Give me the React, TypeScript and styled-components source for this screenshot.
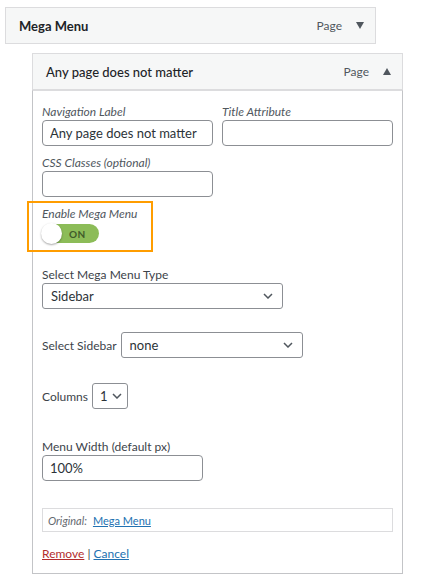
import React from "react";
import styled, { createGlobalStyle } from "styled-components";

const GlobalStyle = createGlobalStyle`
  body {
    margin: 0;
    background: #ffffff;
    font-family: "Lato", "Open Sans", sans-serif;
    color: #3c434a;
  }
`;

const Page = styled.div`
  padding-top: 7px;
  width: 443px;
  height: 580px;
  box-sizing: border-box;
`;

const ItemHeader = styled.div<{ $indent: number }>`
  position: relative;
  margin-left: ${(p) => p.$indent}px;
  width: 371px;
  height: 37px;
  box-sizing: border-box;
  border: 1px solid #dcdcde;
  background: #f6f7f7;
  display: flex;
  align-items: center;
  padding: 0 11px 0 13px;
  overflow: hidden;
`;

const ItemTitle = styled.span<{ $weight?: number }>`
  flex: 1;
  font-size: 13px;
  font-weight: ${(p) => p.$weight ?? 700};
  color: #1d2327;
`;

const ItemType = styled.span`
  font-size: 12px;
  color: #50575e;
  margin-right: 14px;
`;

const Arrow = styled.span<{ $up?: boolean }>`
  width: 0;
  height: 0;
  border-left: 4px solid transparent;
  border-right: 4px solid transparent;
  ${(p) =>
    p.$up
      ? "border-bottom: 7px solid #50575e;"
      : "border-top: 7px solid #50575e;"}
`;

const PeekText = styled.span`
  position: absolute;
  right: 11px;
  bottom: -9px;
  font-size: 10px;
  color: #a7aaad;
`;

const Item = styled.div`
  margin-top: 9px;
  margin-left: 32px;
  width: 371px;
`;

const Body = styled.div`
  border: 1px solid #c3c4c7;
  border-top-color: #dcdcde;
  padding: 12px 9px 12px 9px;
  height: 484px;
  box-sizing: border-box;
`;

const Row = styled.div`
  display: flex;
  gap: 9px;
`;

const Field = styled.div`
  display: flex;
  flex-direction: column;
`;

const ItalicLabel = styled.label`
  font-size: 12px;
  font-style: italic;
  color: #50575e;
  line-height: 17px;
`;

const Label = styled.label`
  font-size: 12px;
  color: #3c434a;
  line-height: 17px;
`;

const TextInput = styled.input<{ $w: number }>`
  width: ${(p) => p.$w}px;
  height: 26px;
  box-sizing: border-box;
  border: 1px solid #8c8f94;
  border-radius: 4px;
  padding: 0 7px;
  font-family: inherit;
  font-size: 13px;
  color: #2c3338;
  background: #fff;
  outline: none;
`;

const Highlight = styled.div`
  margin: 4px 0 0 -15px;
  width: 126px;
  height: 51px;
  box-sizing: border-box;
  border: 2px solid #ff9d00;
  padding: 2px 0 0 13px;
  display: flex;
  flex-direction: column;
`;

const Toggle = styled.div`
  position: relative;
  margin-top: 2px;
  width: 57px;
  height: 19px;
  border-radius: 10px;
  background: #8cbc58;
  display: flex;
  align-items: center;
  padding-left: 27px;
  box-sizing: border-box;
  font-size: 10px;
  font-weight: 700;
  color: #3f5a2a;
  letter-spacing: 0.3px;
`;

const Knob = styled.span`
  position: absolute;
  left: -1px;
  top: -1px;
  width: 21px;
  height: 21px;
  border-radius: 50%;
  background: #fff;
  box-shadow: 0 1px 2px rgba(0, 0, 0, 0.35);
`;

const SelectBox = styled.div<{ $w: number; $pad?: string }>`
  width: ${(p) => p.$w}px;
  height: 26px;
  box-sizing: border-box;
  border: 1px solid #8c8f94;
  border-radius: 3px;
  display: flex;
  align-items: center;
  justify-content: space-between;
  padding: ${(p) => p.$pad ?? "0 9px 0 8px"};
  font-size: 13px;
  color: #2c3338;
  background: #fff;
`;

const Chevron = () => (
  <svg width="10" height="6" viewBox="0 0 10 6">
    <path d="M1 1l4 4 4-4" fill="none" stroke="#50575e" strokeWidth="1.5" />
  </svg>
);

const Section = styled.div<{ $top: number }>`
  margin-top: ${(p) => p.$top}px;
`;

const InlineRow = styled.div<{ $top: number }>`
  margin-top: ${(p) => p.$top}px;
  display: flex;
  align-items: center;
  gap: 4px;
`;

const Original = styled.div`
  margin-top: 27px;
  width: 351px;
  height: 24px;
  box-sizing: border-box;
  border: 1px solid #dcdcde;
  display: flex;
  align-items: center;
  padding-left: 5px;
  gap: 6px;
  font-size: 11px;
`;

const OrigLabel = styled.span`
  font-style: italic;
  color: #646970;
`;

const Link = styled.a<{ $danger?: boolean }>`
  color: ${(p) => (p.$danger ? "#b32d2e" : "#2271b1")};
  text-decoration: underline;
  cursor: pointer;
`;

const Actions = styled.div`
  margin-top: 14px;
  font-size: 12px;
  color: #3c434a;
`;

export default function App() {
  return (
    <>
      <GlobalStyle />
      <Page>
        <ItemHeader $indent={5}>
          <ItemTitle>Mega Menu</ItemTitle>
          <ItemType>Page</ItemType>
          <Arrow />
          <PeekText>Edit</PeekText>
        </ItemHeader>
        <Item>
          <ItemHeader $indent={0}>
            <ItemTitle $weight={500}>Any page does not matter</ItemTitle>
            <ItemType>Page</ItemType>
            <Arrow $up />
            <PeekText>Edit</PeekText>
          </ItemHeader>
          <Body>
            <Row>
              <Field>
                <ItalicLabel>Navigation Label</ItalicLabel>
                <TextInput $w={171} defaultValue="Any page does not matter" />
              </Field>
              <Field>
                <ItalicLabel>Title Attribute</ItalicLabel>
                <TextInput $w={171} />
              </Field>
            </Row>
            <Section $top={8}>
              <Field>
                <ItalicLabel>CSS Classes (optional)</ItalicLabel>
                <TextInput $w={171} />
              </Field>
            </Section>
            <Highlight>
              <ItalicLabel>Enable Mega Menu</ItalicLabel>
              <Toggle>
                <Knob />
                ON
              </Toggle>
            </Highlight>
            <Section $top={14}>
              <Field>
                <Label>Select Mega Menu Type</Label>
                <SelectBox $w={241}>
                  Sidebar
                  <Chevron />
                </SelectBox>
              </Field>
            </Section>
            <InlineRow $top={23}>
              <Label>Select Sidebar</Label>
              <SelectBox $w={182}>
                none
                <Chevron />
              </SelectBox>
            </InlineRow>
            <InlineRow $top={25}>
              <Label>Columns</Label>
              <SelectBox $w={36} $pad="0 5px 0 7px">
                1
                <Chevron />
              </SelectBox>
            </InlineRow>
            <Section $top={29}>
              <Field>
                <Label>Menu Width (default px)</Label>
                <TextInput $w={161} defaultValue="100%" />
              </Field>
            </Section>
            <Original>
              <OrigLabel>Original:</OrigLabel>
              <Link>Mega Menu</Link>
            </Original>
            <Actions>
              <Link $danger>Remove</Link> | <Link>Cancel</Link>
            </Actions>
          </Body>
        </Item>
      </Page>
    </>
  );
}
